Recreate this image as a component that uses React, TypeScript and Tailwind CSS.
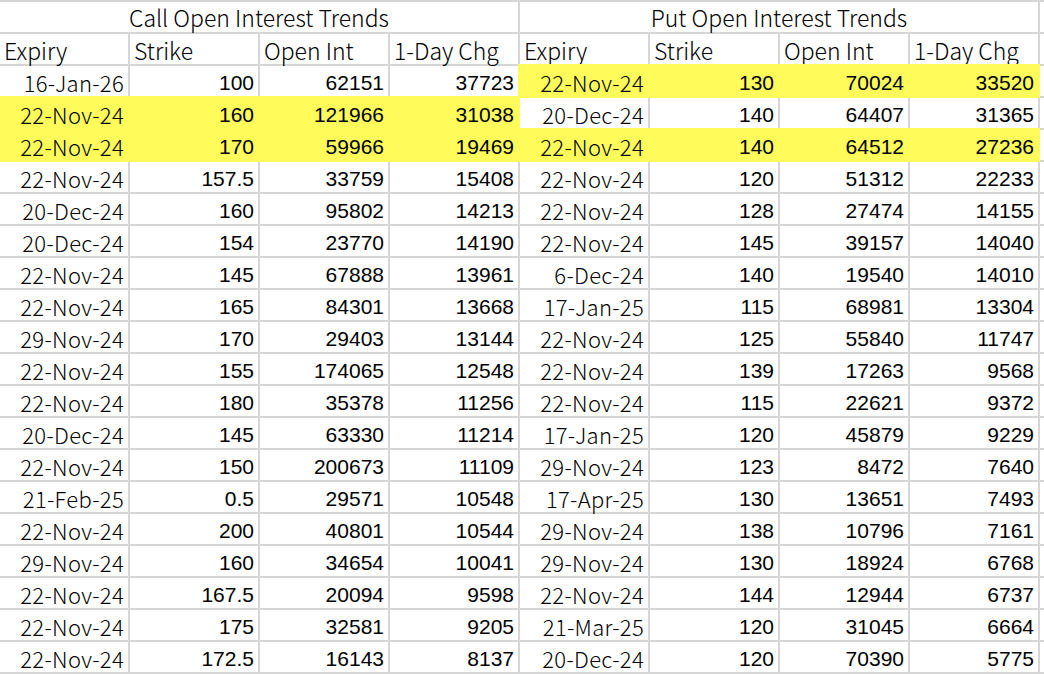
const calls: [string, string, string, string][] = [
  ["16-Jan-26", "100", "62151", "37723"],
  ["22-Nov-24", "160", "121966", "31038"],
  ["22-Nov-24", "170", "59966", "19469"],
  ["22-Nov-24", "157.5", "33759", "15408"],
  ["20-Dec-24", "160", "95802", "14213"],
  ["20-Dec-24", "154", "23770", "14190"],
  ["22-Nov-24", "145", "67888", "13961"],
  ["22-Nov-24", "165", "84301", "13668"],
  ["29-Nov-24", "170", "29403", "13144"],
  ["22-Nov-24", "155", "174065", "12548"],
  ["22-Nov-24", "180", "35378", "11256"],
  ["20-Dec-24", "145", "63330", "11214"],
  ["22-Nov-24", "150", "200673", "11109"],
  ["21-Feb-25", "0.5", "29571", "10548"],
  ["22-Nov-24", "200", "40801", "10544"],
  ["29-Nov-24", "160", "34654", "10041"],
  ["22-Nov-24", "167.5", "20094", "9598"],
  ["22-Nov-24", "175", "32581", "9205"],
  ["22-Nov-24", "172.5", "16143", "8137"],
];

const puts: [string, string, string, string][] = [
  ["22-Nov-24", "130", "70024", "33520"],
  ["20-Dec-24", "140", "64407", "31365"],
  ["22-Nov-24", "140", "64512", "27236"],
  ["22-Nov-24", "120", "51312", "22233"],
  ["22-Nov-24", "128", "27474", "14155"],
  ["22-Nov-24", "145", "39157", "14040"],
  ["6-Dec-24", "140", "19540", "14010"],
  ["17-Jan-25", "115", "68981", "13304"],
  ["22-Nov-24", "125", "55840", "11747"],
  ["22-Nov-24", "139", "17263", "9568"],
  ["22-Nov-24", "115", "22621", "9372"],
  ["17-Jan-25", "120", "45879", "9229"],
  ["29-Nov-24", "123", "8472", "7640"],
  ["17-Apr-25", "130", "13651", "7493"],
  ["29-Nov-24", "138", "10796", "7161"],
  ["29-Nov-24", "130", "18924", "6768"],
  ["22-Nov-24", "144", "12944", "6737"],
  ["21-Mar-25", "120", "31045", "6664"],
  ["20-Dec-24", "120", "70390", "5775"],
];

const callHighlight = [1, 2];
const putHighlight = [0, 2];

const label = "font-['Noto_Sans_CJK_SC',sans-serif] font-light text-[23px]";
const date = "font-['Noto_Sans_CJK_SC',sans-serif] font-light text-[22px] tracking-[0.3px]";
const num = "font-['Liberation_Sans',Arial,sans-serif] text-[21px]";

function Cell({ value, isDate, hl }: { value: string; isDate?: boolean; hl: boolean }) {
  return (
    <div
      className={
        "flex items-center justify-end px-[4px] pt-[2px] leading-none text-black " +
        (isDate ? date : num) +
        (hl ? " relative z-10 bg-[#fefb5b] shadow-[0_0_0_2px_#fefb5b]" : " bg-white")
      }
    >
      {value}
    </div>
  );
}

export default function App() {
  const headers = ["Expiry", "Strike", "Open Int", "1-Day Chg"];
  return (
    <div className="w-[1044px] h-[674px] overflow-hidden bg-white">
      <div className="grid grid-cols-[repeat(8,128px)_1fr] auto-rows-[30px] gap-[2px] bg-[#d6d6d6] pt-[2px] pb-[2px]">
        <div className={"col-span-4 flex items-center justify-center bg-white pt-[1px] text-black leading-none " + label}>
          Call Open Interest Trends
        </div>
        <div className={"col-span-4 flex items-center justify-center bg-white pt-[1px] text-black leading-none " + label}>
          Put Open Interest Trends
        </div>
        <div className="bg-white" />

        {[...headers, ...headers].map((h, i) => (
          <div key={i} className={"flex items-center px-[4px] pt-[2px] bg-white text-black leading-none " + label}>
            {h}
          </div>
        ))}
        <div className="bg-white" />

        {calls.map((c, r) => {
          const p = puts[r];
          const ch = callHighlight.includes(r);
          const ph = putHighlight.includes(r);
          return [
            ...c.map((v, i) => <Cell key={`c${r}-${i}`} value={v} isDate={i === 0} hl={ch} />),
            ...p.map((v, i) => <Cell key={`p${r}-${i}`} value={v} isDate={i === 0} hl={ph} />),
            <div key={`e${r}`} className="bg-white" />,
          ];
        })}
      </div>
    </div>
  );
}
